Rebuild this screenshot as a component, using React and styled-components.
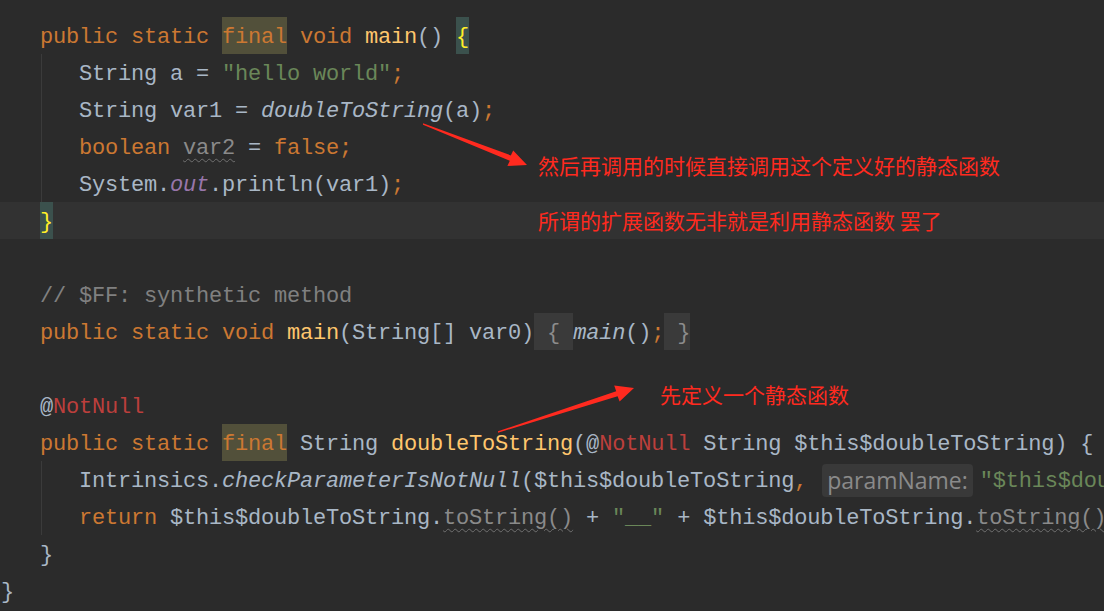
import React from "react";
import styled, { createGlobalStyle, css } from "styled-components";

const Global = createGlobalStyle`
  html, body { margin: 0; padding: 0; background: #2b2b2b; }
  #root { width: 1104px; height: 611px; overflow: hidden; }
`;

const Editor = styled.div`
  position: relative;
  width: 1104px;
  height: 611px;
  overflow: hidden;
  background: #2b2b2b;
  padding-top: 17px;
  box-sizing: border-box;
  font-family: "Liberation Mono", "DejaVu Sans Mono", monospace;
  font-size: 22px;
  letter-spacing: -0.2px;
  color: #a9b7c6;
`;

const Line = styled.div`
  position: relative;
  height: 37px;
  line-height: 41px;
  white-space: pre;
  padding-left: ${(p) => 1 + p.$level * 39}px;
  background: ${(p) => (p.$current ? "#323232" : "transparent")};
  ${(p) =>
    p.$guide &&
    css`
      &::before {
        content: "";
        position: absolute;
        left: 41px;
        top: 0;
        bottom: 0;
        width: 1px;
        background: #3b3b3b;
      }
    `}
`;

const colors = {
  kw: "#cc7832",
  fn: "#ffc66d",
  tx: "#a9b7c6",
  str: "#6a8759",
  cm: "#808080",
  it: "#a9b7c6",
  field: "#9876aa",
  err: "#bc3f3c",
  unused: "#8a8a8a",
  fold: "#8c8c8c",
  brace: "#ffef28",
};

const Tok = styled.span`
  color: ${(p) => colors[p.$k] || colors.tx};
  font-style: ${(p) => (p.$k === "it" || p.$k === "field" ? "italic" : "normal")};
  ${(p) =>
    p.$k === "unused" &&
    css`
      text-decoration: underline wavy #707070;
      text-decoration-thickness: 1px;
      text-underline-offset: 4px;
    `}
`;

const Marked = styled.span`
  display: inline-block;
  height: 37px;
  line-height: 41px;
  vertical-align: top;
  color: ${(p) => (p.$k === "brace" ? colors.brace : p.$k === "fold" ? colors.fold : colors.kw)};
  background: ${(p) =>
    p.$k === "brace" ? "#3b514d" : p.$k === "fold" ? "#3a3a3a" : "#52503a"};
`;

const Hint = styled.span`
  display: inline-block;
  height: 33px;
  line-height: 33px;
  margin: 3px 7px 0 2px;
  padding: 0 5px;
  vertical-align: top;
  border-radius: 4px;
  background: #393939;
  color: #8a8a8a;
  font-family: "Open Sans", "Noto Sans", sans-serif;
  font-size: 23px;
  letter-spacing: 0;
`;

const Note = styled.div`
  position: absolute;
  left: ${(p) => p.$x}px;
  top: ${(p) => p.$y}px;
  color: #ff2a1f;
  font-family: "Noto Sans CJK SC", "Noto Sans", sans-serif;
  font-size: 21px;
  line-height: 28px;
  letter-spacing: 0;
  white-space: pre;
`;

const Arrows = styled.svg`
  position: absolute;
  left: 0;
  top: 0;
  pointer-events: none;
`;

const T = ({ k = "tx", children }) => <Tok $k={k}>{children}</Tok>;

export default function App() {
  return (
    <>
      <Global />
      <Editor>
        <Line $level={1}>
          <T k="kw">public static </T>
          <Marked $k="final">final</Marked>
          <T k="kw"> void </T>
          <T k="fn">main</T>
          <T>() </T>
          <Marked $k="brace">{"{"}</Marked>
        </Line>
        <Line $level={2} $guide>
          <T>String a = </T>
          <T k="str">"hello world"</T>
          <T k="kw">;</T>
        </Line>
        <Line $level={2} $guide>
          <T>String var1 = </T>
          <T k="it">doubleToString</T>
          <T>(a)</T>
          <T k="kw">;</T>
        </Line>
        <Line $level={2} $guide>
          <T k="kw">boolean </T>
          <T k="unused">var2</T>
          <T> = </T>
          <T k="kw">false;</T>
        </Line>
        <Line $level={2} $guide>
          <T>System.</T>
          <T k="field">out</T>
          <T>.println(var1)</T>
          <T k="kw">;</T>
        </Line>
        <Line $level={1} $current>
          <Marked $k="brace">{"}"}</Marked>
        </Line>
        <Line $level={1} />
        <Line $level={1}>
          <T k="cm">// $FF: synthetic method</T>
        </Line>
        <Line $level={1}>
          <T k="kw">public static void </T>
          <T k="fn">main</T>
          <T>(String[] var0)</T>
          <Marked $k="fold">{" { "}</Marked>
          <T k="it">main</T>
          <T>()</T>
          <T k="kw">;</T>
          <Marked $k="fold">{" }"}</Marked>
        </Line>
        <Line $level={1} />
        <Line $level={1}>
          <T>@</T>
          <T k="err">NotNull</T>
        </Line>
        <Line $level={1}>
          <T k="kw">public static </T>
          <Marked $k="final">final</Marked>
          <T> String </T>
          <T k="fn">doubleToString</T>
          <T>(@</T>
          <T k="err">NotNull</T>
          <T> String $this$doubleToString) {"{"}</T>
        </Line>
        <Line $level={2} $guide>
          <T>Intrinsics.</T>
          <T k="it">checkParameterIsNotNull</T>
          <T>($this$doubleToString</T>
          <T k="kw">, </T>
          <Hint>paramName:</Hint>
          <T k="str">"$this$dou</T>
        </Line>
        <Line $level={2} $guide>
          <T k="kw">return </T>
          <T>$this$doubleToString.</T>
          <T k="unused">toString()</T>
          <T> + </T>
          <T k="str">"__"</T>
          <T> + $this$doubleToString.</T>
          <T k="unused">toString()</T>
        </Line>
        <Line $level={1}>
          <T>{"}"}</T>
        </Line>
        <Line $level={0}>
          <T>{"}"}</T>
        </Line>

        <Note $x={538} $y={151}>然后再调用的时候直接调用这个定义好的静态函数</Note>
        <Note $x={538} $y={206}>所谓的扩展函数无非就是利用静态函数 罢了</Note>
        <Note $x={660} $y={380}>先定义一个静态函数</Note>

        <Arrows width="1104" height="611" viewBox="0 0 1104 611">
          <polygon
            fill="#ff2a1f"
            points="423,123.3 510.8,155.4 513.2,150.5 527,165 507.4,166 509.8,160.8 423,124.7"
          />
          <polygon
            fill="#ff2a1f"
            points="498,431.3 616.2,391.2 614.2,385.6 634,388 619.6,401.6 617.6,396.2 498,432.7"
          />
        </Arrows>
      </Editor>
    </>
  );
}
